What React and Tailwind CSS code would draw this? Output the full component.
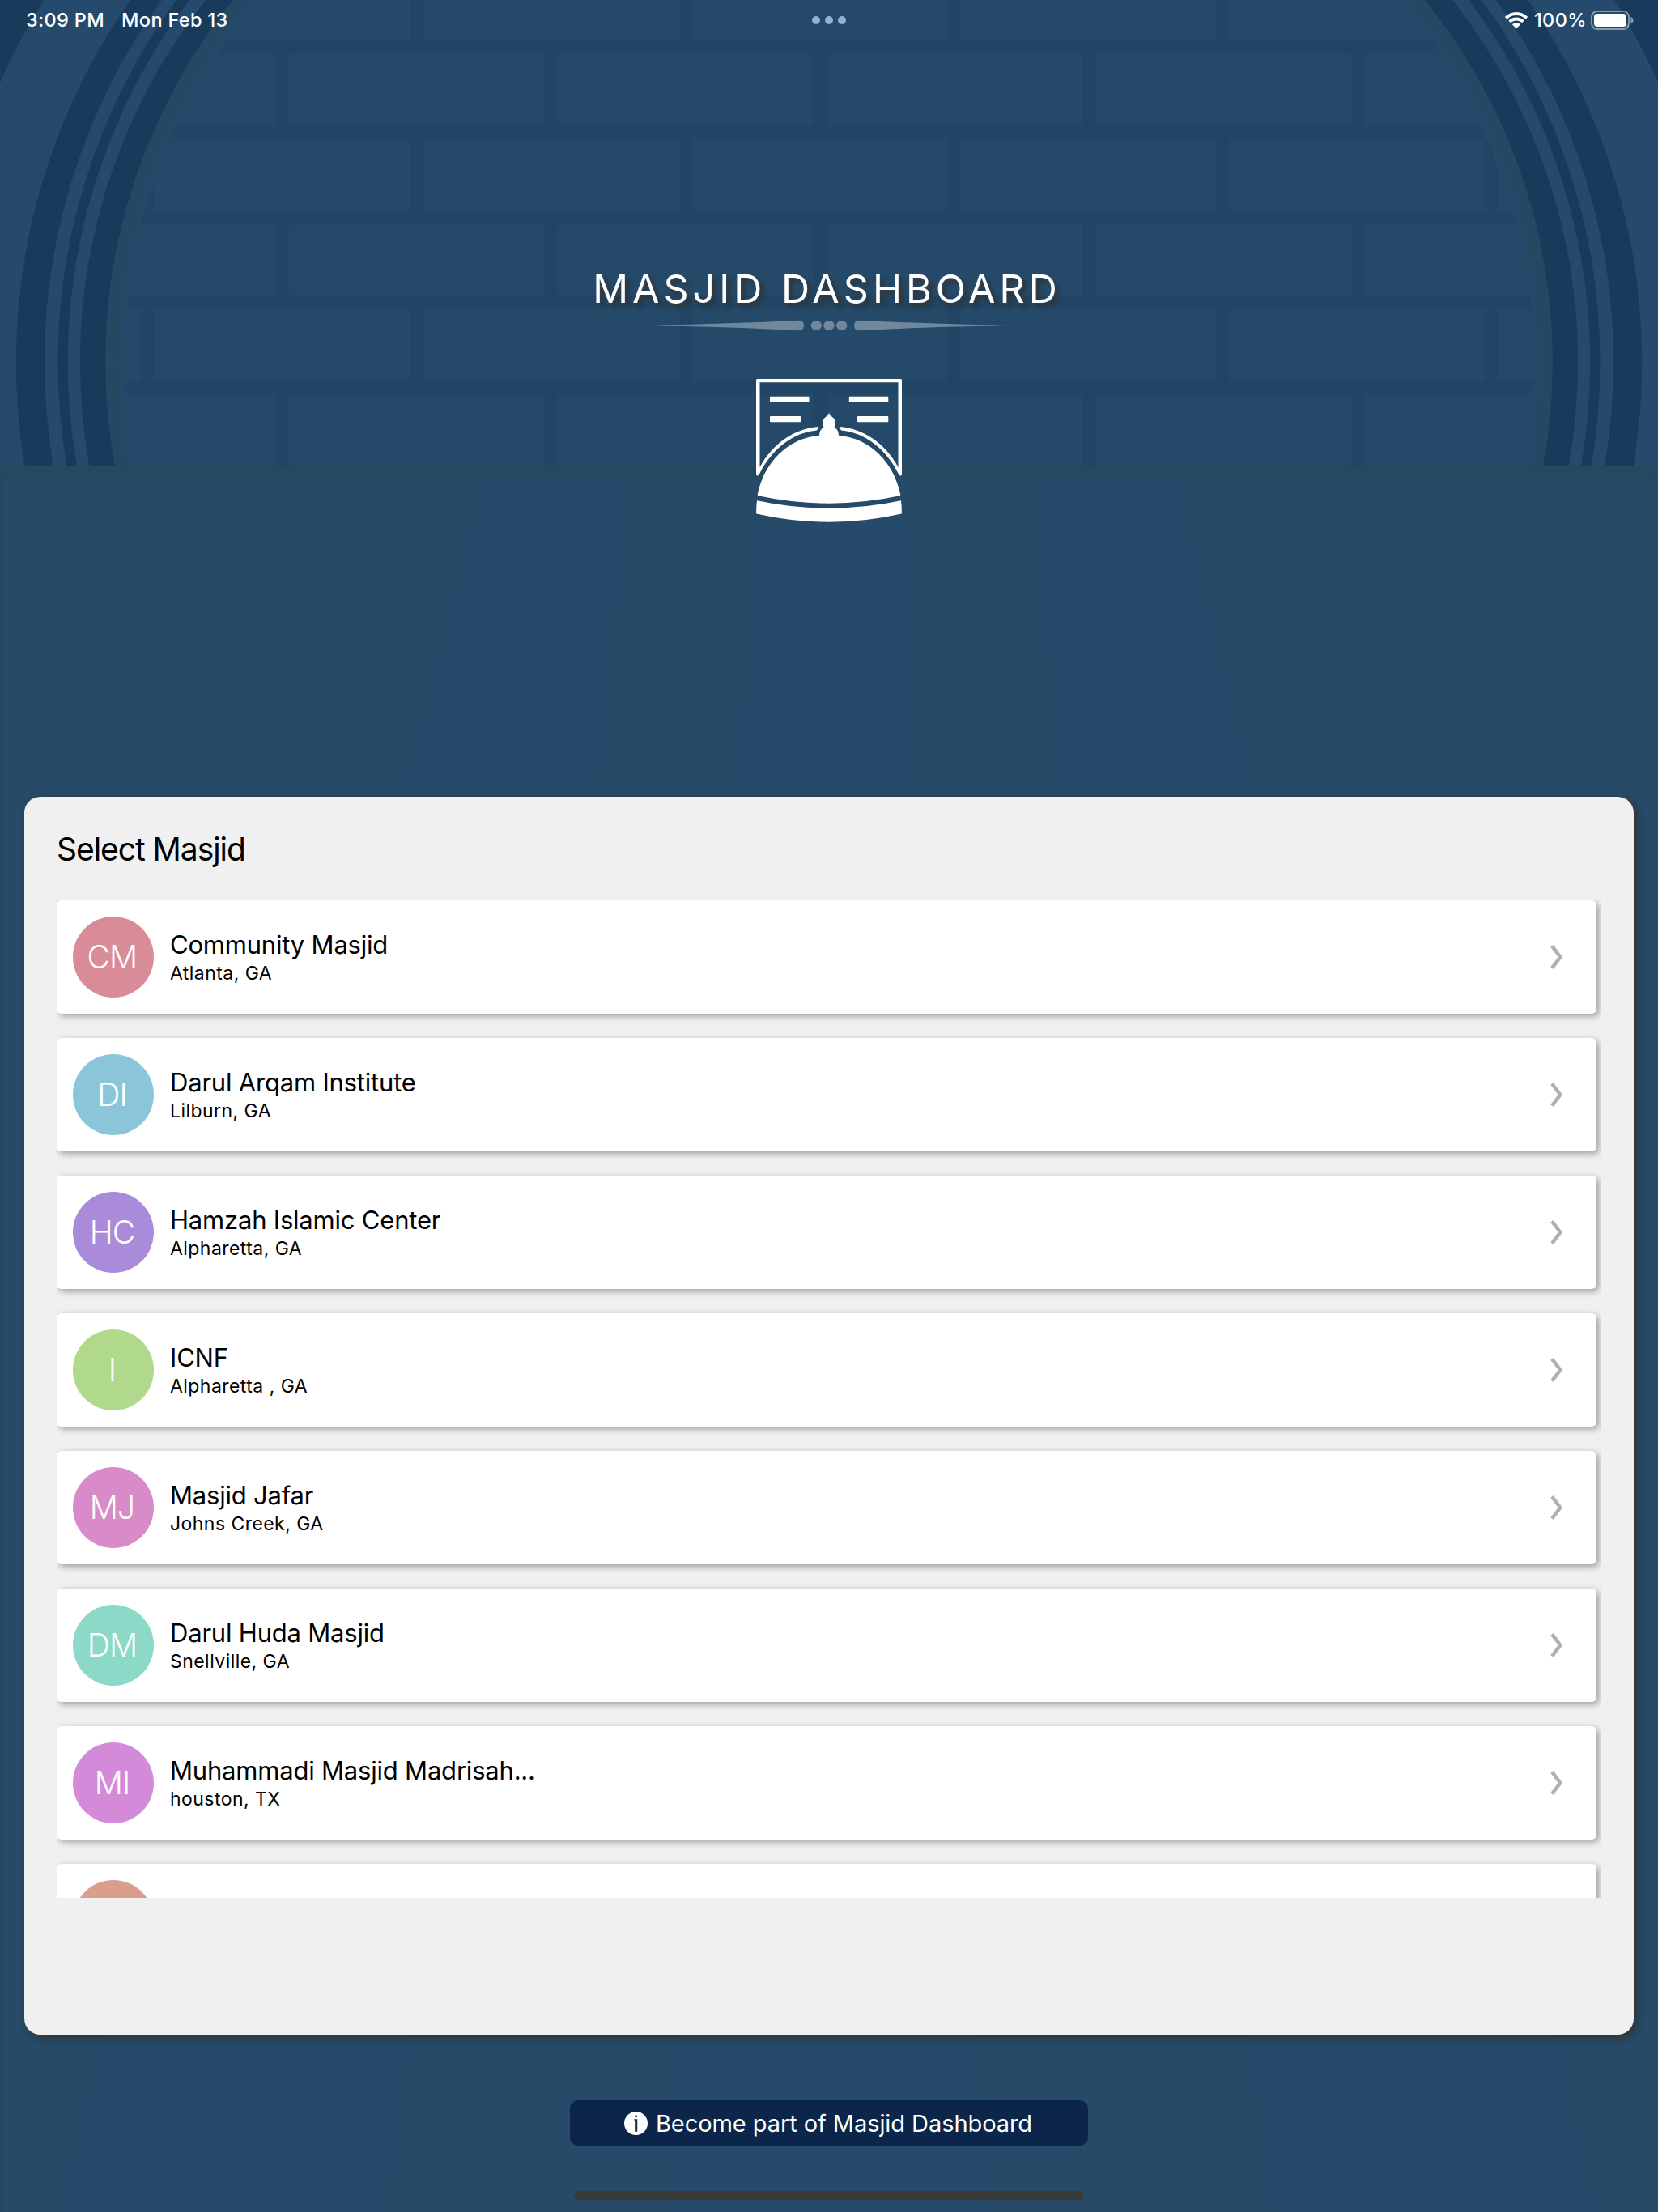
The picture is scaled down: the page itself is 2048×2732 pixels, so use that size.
const masjids = [
  { initials: 'CM', name: 'Community Masjid', place: 'Atlanta, GA', color: 'bg-[#d98b97]' },
  { initials: 'DI', name: 'Darul Arqam Institute', place: 'Lilburn, GA', color: 'bg-[#8bc5d9]' },
  { initials: 'HC', name: 'Hamzah Islamic Center', place: 'Alpharetta, GA', color: 'bg-[#a98bd9]' },
  { initials: 'I', name: 'ICNF', place: 'Alpharetta , GA', color: 'bg-[#b1d98b]' },
  { initials: 'MJ', name: 'Masjid Jafar', place: 'Johns Creek, GA', color: 'bg-[#d98bc9]' },
  { initials: 'DM', name: 'Darul Huda Masjid', place: 'Snellville, GA', color: 'bg-[#8bd9c6]' },
  { initials: 'MI', name: 'Muhammadi Masjid Madrisah...', place: 'houston, TX', color: 'bg-[#d38bd9]' },
  { initials: '', name: '', place: '', color: 'bg-[#d99f8b]' },
];

// Edges of the arch mouldings: x at the top, x at the base, radius of curvature.
const rings = [
  { top: 161, base: 30.5, r: 779, fill: '#183b5c' },
  { top: 200, base: 66, r: 761, fill: '#264a6b' },
  { top: 218, base: 82.5, r: 757, fill: '#183b5c' },
  { top: 234, base: 95, r: 741, fill: '#264a6b' },
  { top: 254, base: 110.5, r: 722, fill: '#183b5c' },
  { top: 288, base: 142, r: 711, fill: '#254962' },
  { top: 308, base: 158, r: 698, fill: '#254a69' },
];

const arch = ({ top, base, r }) =>
  `M${top} 0A${r} ${r} 0 0 0 ${base} 576H${2048 - base}A${r} ${r} 0 0 0 ${2048 - top} 0Z`;

function Backdrop() {
  return (
    <svg className="absolute inset-0 h-full w-full" viewBox="0 0 2048 2732" aria-hidden="true">
      <defs>
        <clipPath id="wall">
          <path d={arch({ top: 318, base: 166, r: 690 })} />
        </clipPath>
        <filter id="soft" x="0" y="0" width="100%" height="100%" colorInterpolationFilters="sRGB">
          <feGaussianBlur stdDeviation="1" />
        </filter>
      </defs>
      <rect width="2048" height="2732" fill="#264a67" />
      <rect width="2048" height="576" fill="#264a6b" />
      <path d="M0 0H54Q22 52 0 102ZM2048 0H1994Q2026 52 2048 102Z" fill="#183b5c" />
      {rings.map((ring) => (
        <path key={ring.top} d={arch(ring)} fill={ring.fill} />
      ))}
      <g clipPath="url(#wall)">
        <g fill="#214564" filter="url(#soft)">
          {[51, 156, 261, 365.5, 470.5].map((y) => (
            <rect key={y} x="0" y={y} width="2048" height="15.5" />
          ))}
          {[0, 171, 381].map((y) =>
            [174, 507, 839.5, 1170.5, 1502.5, 1834].map((x) => (
              <rect key={`${x}-${y}`} x={x} y={y} width="15.5" height={y === 0 ? 51 : 90} />
            ))
          )}
          {[66.5, 276, 486].map((y) =>
            [341, 673.5, 1005.5, 1337.5, 1669.5].map((x) => (
              <rect key={`${x}-${y}`} x={x} y={y} width="15.5" height="90" />
            ))
          )}
        </g>
      </g>
      <rect y="576" width="2048" height="16" fill="#254961" />
      <g fill="#254a6a">
        <path d="M600 600H770L731 980L471 2732H80L503 980Z" />
        <path d="M935 600H1113L1130 980L1216 2732H827L920 980Z" />
        <path d="M1278 600H1448L1545 980L1968 2732H1577L1317 980Z" />
      </g>
      <path d="M0 592H5V2732H0ZM2043 592H2048V2732H2043Z" fill="#254962" />
    </svg>
  );
}

function StatusBar() {
  return (
    <header className="relative grid h-[50px] grid-cols-3 items-center pl-[32px] pr-[30px] text-[23.5px] font-medium text-white">
      <div className="flex gap-[21px] pb-px leading-[46px] tracking-[0.35px]">
        <span>3:09 PM</span>
        <span>Mon Feb 13</span>
      </div>
      <div className="flex justify-center gap-[6px] pr-[2px]">
        <span className="size-[10px] rounded-full bg-[#8fb2d9]" />
        <span className="size-[10px] rounded-full bg-[#8fb2d9]" />
        <span className="size-[10px] rounded-full bg-[#8fb2d9]" />
      </div>
      <div className="flex items-center justify-end pb-px">
        <svg className="mr-[8px] h-5 w-7" viewBox="0 0 28 20" fill="#fff">
          <path d="M14 0C19.4 0 24.2 2.1 27.7 5.5Q28.2 6 27.7 6.5L26 8.2Q25.5 8.6 25 8.2C22.1 5.4 18.3 3.9 14 3.9S5.9 5.4 3 8.2Q2.5 8.6 2 8.2L.3 6.5Q-.2 6 .3 5.5C3.8 2.1 8.6 0 14 0Z" />
          <path d="M14 6.6C17.6 6.6 20.8 7.9 23.2 10.1Q23.7 10.6 23.2 11.1L21.4 12.8Q20.9 13.2 20.4 12.8C18.7 11.3 16.5 10.4 14 10.4S9.3 11.3 7.6 12.8Q7.1 13.2 6.6 12.8L4.8 11.1Q4.3 10.6 4.8 10.1C7.2 7.9 10.4 6.6 14 6.6Z" />
          <path d="M14 13.2C15.8 13.2 17.3 13.8 18.6 14.8Q19.1 15.3 18.6 15.8L14.6 19.7Q14 20.2 13.4 19.7L9.4 15.8Q8.9 15.3 9.4 14.8C10.7 13.8 12.2 13.2 14 13.2Z" />
        </svg>
        <span className="mr-[5px] leading-[46px] tracking-[0.4px]">100%</span>
        <svg className="h-6 w-[53px]" viewBox="0 0 53 24">
          <rect x="1" y="1" width="46" height="22" rx="7" fill="none" stroke="#fff" strokeOpacity=".45" strokeWidth="2" />
          <rect x="4" y="4" width="40" height="16" rx="4" fill="#fff" />
          <path d="M49.5 8Q52.5 9 52.5 12T49.5 16Z" fill="#fff" fillOpacity=".5" />
        </svg>
      </div>
    </header>
  );
}

function Divider() {
  return (
    <svg className="h-[14px] w-[438px]" viewBox="0 0 438 14">
      <defs>
        <linearGradient id="fade" gradientUnits="userSpaceOnUse" x1="0" y1="0" x2="438" y2="0">
          <stop offset="0" stopColor="#6f889d" stopOpacity="0" />
          <stop offset=".04" stopColor="#6f889d" />
          <stop offset=".96" stopColor="#6f889d" />
          <stop offset="1" stopColor="#6f889d" stopOpacity="0" />
        </linearGradient>
      </defs>
      <g fill="url(#fade)">
        <path d="M0 6.5Q100 5 182 .7Q188 1 188 7T182 13.3Q100 8.5 0 7.5Z" />
        <path d="M438 6.5Q338 5 256 .7Q250 1 250 7T256 13.3Q338 8.5 438 7.5Z" />
      </g>
      <g fill="#6f889d">
        <ellipse cx="203.3" cy="7" rx="6.7" ry="6" />
        <ellipse cx="219" cy="7" rx="6.7" ry="6" />
        <ellipse cx="234.7" cy="7" rx="6.7" ry="6" />
      </g>
    </svg>
  );
}

function Logo() {
  return (
    <svg className="h-[177px] w-[180px]" viewBox="0 0 180 177" fill="#fff">
      <path
        fillRule="evenodd"
        d="M1.5 0H178.5Q180 0 180 1.5V118.5Q178.5 120.5 176.5 118.5C162 88 135 66 105 63.5L102.5 59C132 61 159 79 175.5 109V4.3H4.5V109C21 79 48 61 77.5 59L75 63.5C45 66 18 88 3.5 118.5Q1.5 120.5 0 118.5V1.5Q0 0 1.5 0Z"
      />
      <rect x="17" y="21.7" width="48.5" height="7" rx="1" />
      <rect x="114.8" y="21.7" width="48.5" height="7" rx="1" />
      <rect x="17" y="46" width="38.3" height="7.3" rx="1" />
      <rect x="125" y="46" width="38.3" height="7.3" rx="1" />
      <path d="M90 42Q91.2 45.2 93.5 46.5A9.3 9.3 0 0 1 96.5 59.5A12 12 0 0 1 102 69.7C140 73 170 102 178.3 143Q178.3 144 177.5 144.3Q134 153.7 90 153.7T2.5 144.3Q1.7 144 1.7 143C10 102 40 73 78 69.7A12 12 0 0 1 83.5 59.5A9.3 9.3 0 0 1 86.5 46.5Q88.8 45.2 90 42Z" />
      <path d="M1 150.3Q45 159.7 90 159.7T179 150.3Q180 158 179.8 166.5Q135 176.7 90 176.7T.2 166.5Q0 158 1 150.3Z" />
    </svg>
  );
}

function MasjidCard({ initials, name, place, color }) {
  return (
    <li className="flex h-[140px] w-[1902px] shrink-0 items-center gap-5 rounded-[6px] bg-white pl-5 pr-[41px] shadow-[3px_3px_8px_rgba(0,0,0,0.35)]">
      <span className={`flex size-[100px] items-center justify-center rounded-full pr-[3px] text-[39px] font-[330] tracking-[-0.8px] text-white ${color}`}>
        {initials}
      </span>
      <span className="flex grow flex-col text-black">
        <span className="text-[31px] leading-10 tracking-[-0.2px]">{name}</span>
        <span className="text-[23px] leading-[30px] tracking-[0.45px]">{place}</span>
      </span>
      <svg className="h-[30px] w-[16px]" viewBox="0 0 16 30" fill="none" stroke="#b0b0b0" strokeWidth="4.5">
        <path d="M2 1.3L12.3 15L2 28.7" />
      </svg>
    </li>
  );
}

export default function App() {
  return (
    <div className="relative flex h-[2732px] w-[2048px] flex-col overflow-hidden bg-[#264a67] font-['Inter','Liberation_Sans',sans-serif]">
      <Backdrop />
      <StatusBar />
      <section className="relative flex h-[934px] flex-col items-center pt-[277px]">
        <h1 className="pr-[5px] text-[48.5px] leading-[60px] tracking-[5px] text-white [text-shadow:5px_5px_5px_#333]">
          MASJID DASHBOARD
        </h1>
        <div className="mt-2 flex">
          <Divider />
        </div>
        <div className="mt-[59px] flex">
          <Logo />
        </div>
      </section>
      <main className="relative mx-[30px] flex h-[1529px] flex-col rounded-[20px] bg-[#f0f0f0] pl-10 pt-[41px] shadow-[4px_4px_10px_#333]">
        <h2 className="text-[39px] leading-[48px] tracking-[-1.05px] text-black">Select Masjid</h2>
        <ul className="mt-[39px] flex h-[1232px] w-[1908px] flex-col gap-[30px] overflow-hidden">
          {masjids.map((masjid) => (
            <MasjidCard key={masjid.color} {...masjid} />
          ))}
        </ul>
      </main>
      <footer className="relative flex flex-col items-center pt-[81px]">
        <button className="flex h-14 w-[640px] items-center justify-center gap-[10px] rounded-[10px] bg-[#0c264b] pr-[2px] text-[29px] tracking-[-0.07px] text-white">
          <svg className="size-[29px]" viewBox="0 0 29 29">
            <circle cx="14.5" cy="14.5" r="14.5" fill="#fff" />
            <circle cx="14.6" cy="5.7" r="1.5" fill="#0c264b" />
            <path d="M12.2 9.2H16.2V24.8H13.2V10.4H12.2Z" fill="#0c264b" />
          </svg>
          <span className="pt-px">Become part of Masjid Dashboard</span>
        </button>
        <div className="mt-14 h-[11px] w-[630px] rounded-full bg-[#3a3a3a]" />
      </footer>
    </div>
  );
}
